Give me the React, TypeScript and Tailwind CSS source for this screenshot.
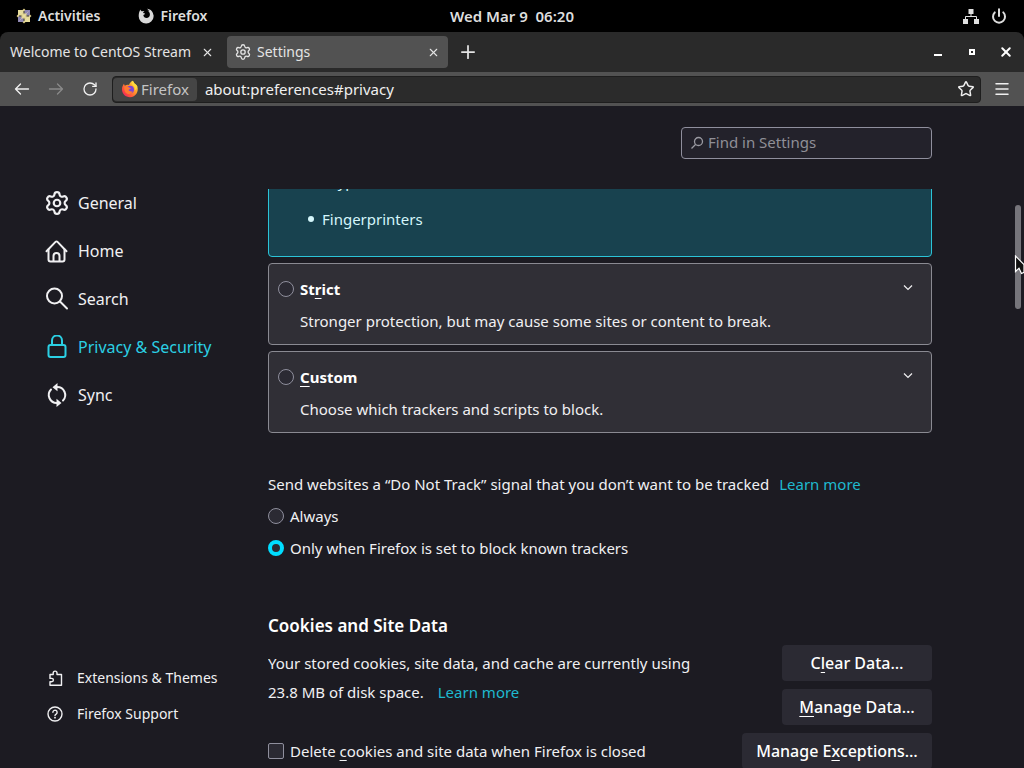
import type { ReactNode } from 'react';
import { Menu, Plus, Power, RotateCw, Settings, Star, X } from 'lucide-react';

function CentosLogo() {
  return (
    <svg width="16" height="16" viewBox="0 0 16 16" aria-hidden="true">
      <path d="M8 .5L10.500 3h-5zM8 15.500L5.500 13h5zM.5 8L3 5.500v5zM15.500 8L13 10.500v-5z" fill="#d3c27a" />
      <path d="M2 2h5.500v5.500H2zM8.500 8.500H14V14H8.500z" fill="#e6dc9c" />
      <path d="M8.500 2H14v5.500H8.500zM2 8.500h5.500V14H2z" fill="#8d86b4" />
      <path d="M5.500 5.500h5v5h-5z" fill="#ddd08a" />
      <path d="M8 1.500v13M1.500 8h13M3.500 3.500l9 9M12.500 3.500l-9 9" stroke="#efe6b4" strokeWidth=".4" />
    </svg>
  );
}

function FirefoxMono() {
  return (
    <svg width="16" height="16" viewBox="0 0 16 16" fill="#d8d8d8" aria-hidden="true">
      <path d="M2.400 1.600c.3 1 .9 1.500 1.600 1.800.8-.4 1.700-.5 2.500-.3-.9.5-1.300 1.100-1.400 1.800l1.900.6c0 .8-1 1.200-1.700 1.600.2 1.800 1.500 2.900 3.200 2.900 2 0 3.400-1.500 3.400-3.500 0-1.800-.9-3.100-2.400-4.100 3.600.3 6.100 2.900 6.100 6.300a7.300 7.300 0 0 1-7.500 6.800A7.300 7.300 0 0 1 .7 8.200C.7 5.600 1.300 3.400 2.400 1.600z" />
      <path d="M9 .8c3.900.2 6.400 3.200 6.400 7.200l-2.900-2.500C12 3.500 10.800 1.900 9 .8z" />
    </svg>
  );
}

function FirefoxLogo() {
  return (
    <svg width="18" height="18" viewBox="0 0 18 18" aria-hidden="true">
      <defs>
        <linearGradient id="fox" x1="1" y1="0.1" x2="0.1" y2="1">
          <stop offset="0" stopColor="#fff04a" />
          <stop offset="0.4" stopColor="#ff9a2b" />
          <stop offset="0.75" stopColor="#ff4a3f" />
          <stop offset="1" stopColor="#e31b6d" />
        </linearGradient>
      </defs>
      <path d="M11.500.8c1 .9 1.600 1.800 1.900 2.700 1.200.6 2.300 1.600 2.900 2.900C18 11 14.800 17.200 9 17.200 4.500 17.200 1 13.800 1 9.500c0-2.200.7-4 2-5.700.1.9.4 1.400.9 1.900C5 4.900 6.600 4.700 8 5c.8-1.900 1.900-3.300 3.500-4.200z" fill="url(#fox)" />
      <circle cx="9.200" cy="9.500" r="3.800" fill="#7a45d6" />
      <path d="M3.500 6.500c2-.8 3.900-.2 5 1.200l1.400.4c-.5 1.200-1.700 1.100-2.300 2 .8 1.500 2.500 1.800 4 1.100-.7 2.400-3 3.300-5.200 2.500-2.200-.9-3.600-3.800-2.900-7.200z" fill="#ff7a32" />
      <path d="M11.500.8c-1.300 1.800-.8 3.300.4 4.400 1.600 1.400 2.300 3 1.900 5 1.700-1.100 2.300-2.600 2.500-3.800-.6-1.300-1.700-2.300-2.900-2.900-.3-.9-.9-1.800-1.900-2.700z" fill="#ffd83d" />
    </svg>
  );
}

function NetworkIcon() {
  return (
    <svg width="16" height="16" viewBox="0 0 16 16" fill="#e0e0e0" aria-hidden="true">
      <path d="M5.500 1h5v5h-5zM0 11h5v5H0zM11 11h5v5h-5z" />
      <path d="M8 6v2.500M2.500 11V8.500h11V11" fill="none" stroke="#e0e0e0" />
    </svg>
  );
}

function Arrow({ className = '' }: { className?: string }) {
  return (
    <svg width="16" height="16" viewBox="0 0 16 16" fill="none" stroke="currentColor" strokeWidth="1.3" strokeLinecap="round" strokeLinejoin="round" className={className} aria-hidden="true">
      <path d="M1.500 8h13M6.500 3l-5 5 5 5" />
    </svg>
  );
}

const HomeIcon = () => (
  <svg width="24" height="24" viewBox="0 0 24 24" fill="none" stroke="currentColor" strokeWidth="2" strokeLinecap="round" strokeLinejoin="round" aria-hidden="true">
    <path d="M1.500 12.200l9-9.300a1.400 1.400 0 0 1 2 0l9 9.300" />
    <path d="M3.500 10.500v10a2 2 0 0 0 2 2h12a2 2 0 0 0 2-2v-10" />
    <path d="M8.500 22v-5a3 3 0 0 1 6 0v5" />
  </svg>
);

const SearchIcon = () => (
  <svg width="24" height="24" viewBox="0 0 24 24" fill="none" stroke="currentColor" strokeWidth="2" strokeLinecap="round" aria-hidden="true">
    <circle cx="9.500" cy="9" r="7.500" />
    <path d="M15 14.500l7 7" />
  </svg>
);

const LockIcon = () => (
  <svg width="24" height="24" viewBox="0 0 24 24" fill="none" stroke="currentColor" strokeWidth="2" aria-hidden="true">
    <rect x="3.500" y="10" width="17" height="12" rx="2" />
    <path d="M7 10V5.500a5 5 0 0 1 10 0V10" />
  </svg>
);

const SyncIcon = () => (
  <svg width="24" height="24" viewBox="0 0 24 24" fill="none" stroke="currentColor" strokeWidth="2" strokeLinecap="round" aria-hidden="true">
    <path d="M12 4a8 8 0 0 1 6 13.500M12 20A8 8 0 0 1 6 6.500" />
    <path d="M12.500 0v8.200L7.500 4.200zM11.500 15.800V24l5-4z" fill="currentColor" stroke="none" />
  </svg>
);

const PuzzleIcon = () => (
  <svg width="16" height="16" viewBox="0 0 16 16" fill="none" stroke="currentColor" strokeWidth="1.400" strokeLinejoin="round" aria-hidden="true">
    <path d="M3 4.500h3.200V3a1.900 1.900 0 0 1 3.800 0v1.500h4.500v10.700H3v-3.400h1.700a1.700 1.700 0 0 0 0-3.400H3z" />
  </svg>
);

const HelpIcon = () => (
  <svg width="16" height="16" viewBox="0 0 16 16" fill="none" stroke="currentColor" strokeWidth="1.400" strokeLinecap="round" aria-hidden="true">
    <circle cx="8" cy="8" r="7" />
    <path d="M5.900 6.300a2.100 2.100 0 1 1 3.200 1.800c-.7.4-1.100.7-1.100 1.400" />
    <circle cx="8" cy="11.700" r=".9" fill="currentColor" stroke="none" />
  </svg>
);

const categories = [
  { label: 'General', icon: <Settings size={24} viewBox="1 1 22 22" /> },
  { label: 'Home', icon: <HomeIcon /> },
  { label: 'Search', icon: <SearchIcon /> },
  { label: 'Privacy & Security', icon: <LockIcon />, active: true },
  { label: 'Sync', icon: <SyncIcon /> },
];

const radio =
  'size-4 shrink-0 appearance-none rounded-full border border-[#8f8f9d] bg-[#2b2a33] checked:border-4 checked:border-[#00ddff]';

function Key({ children }: { children: ReactNode }) {
  return <span className="underline decoration-1 underline-offset-3">{children}</span>;
}

function TopBar() {
  return (
    <header className="grid h-8 shrink-0 grid-cols-3 items-center bg-black px-4 text-sm font-semibold text-[#dedede]">
      <div className="flex items-center gap-[38px]">
        <button className="flex items-center gap-1.5"><CentosLogo />Activities</button>
        <button className="flex items-center gap-1.5"><FirefoxMono />Firefox</button>
      </div>
      <button className="justify-self-center text-[15px] leading-5 whitespace-pre">Wed Mar 9  06:20</button>
      <div className="flex items-center gap-3 justify-self-end pr-px">
        <NetworkIcon />
        <Power size={16} strokeWidth={3} />
      </div>
    </header>
  );
}

function TabBar() {
  return (
    <div className="bg-black">
      <div className="flex h-10 items-center rounded-t-lg bg-[#2a2a2a] text-sm text-[#e4e4e4]">
        <div className="flex w-[227px] items-center gap-2.5 pl-2.5">
          <button className="whitespace-nowrap">Welcome to CentOS Stream</button>
          <button aria-label="Close tab"><X size={13} strokeWidth={2} /></button>
        </div>
        <div className="flex h-8 w-[221px] items-center rounded-sm bg-[#525252] px-2">
          <Settings size={16} viewBox="1 1 22 22" strokeWidth={1.8} />
          <button className="flex-1 pl-1.5 text-left">Settings</button>
          <button aria-label="Close tab"><X size={13} strokeWidth={2} /></button>
        </div>
        <button className="ml-3" aria-label="New tab"><Plus size={16} strokeWidth={2} viewBox="4 4 16 16" className="p-px" /></button>
        <div className="ml-auto flex items-center gap-[22px] pr-3 text-white">
          <button aria-label="Minimize" className="flex size-3 items-end justify-center pb-0.5"><span className="h-0.5 w-2 bg-white" /></button>
          <button aria-label="Restore" className="flex size-3 items-center justify-center"><span className="size-1.5 border-2 border-white" /></button>
          <button aria-label="Close window"><X size={12} strokeWidth={3} viewBox="4 4 16 16" className="p-px" /></button>
        </div>
      </div>
    </div>
  );
}

function NavBar() {
  return (
    <div className="flex h-[34px] shrink-0 items-center bg-[#525252] px-3.5 text-[#f0f0f0]">
      <div className="flex items-center gap-[18px]">
        <button aria-label="Back"><Arrow /></button>
        <button aria-label="Forward" className="text-[#8a8a8a]"><Arrow className="rotate-180" /></button>
        <button aria-label="Reload"><RotateCw size={16} strokeWidth={2} /></button>
      </div>
      <div className="ml-3.5 flex h-[27px] flex-1 items-center rounded-sm border border-[#1e1e1e] bg-[#2b2b2b]">
        <button className="flex h-[23px] items-center gap-0.5 rounded-sm bg-[#454545] px-2 text-[15px] text-[#c4c4c4]">
          <FirefoxLogo />Firefox
        </button>
        <input aria-label="Address" className="min-w-0 flex-1 bg-transparent pl-2 text-[15px] outline-none" defaultValue="about:preferences#privacy" />
        <button aria-label="Bookmark this page" className="pr-1.5"><Star size={16} strokeWidth={2} viewBox="1 1 22 22" /></button>
      </div>
      <button className="-mr-px ml-3" aria-label="Open menu"><Menu size={18} strokeWidth={2} /></button>
    </div>
  );
}

function Sidebar() {
  return (
    <aside className="flex w-[268px] shrink-0 flex-col pt-[73px] pr-7 pb-9 pl-9">
      <nav className="flex flex-col text-base">
        {categories.map(({ label, icon, active }) => (
          <a
            key={label}
            href="#"
            className={`flex h-12 items-center gap-[9px] rounded-sm pl-[9px] ${active ? 'text-[#2bd0e4]' : 'text-[#f0f0f2]'}`}
          >
            {icon}
            {label}
          </a>
        ))}
      </nav>
      <div className="mt-auto flex flex-col text-sm text-[#f0f0f2]">
        <a href="#" className="flex h-9 items-center gap-3.5 pl-[11px]"><PuzzleIcon />Extensions &amp; Themes</a>
        <a href="#" className="flex h-9 items-center gap-3.5 pl-[11px]"><HelpIcon />Firefox Support</a>
      </div>
    </aside>
  );
}

function ProtectionCard({ id, title, text }: { id: string; title: ReactNode; text: string }) {
  return (
    <div className="flex items-start rounded-sm border border-[#8a8a92] bg-[#302f36] pt-[13px] pr-4 pb-[11px] pl-[9px]">
      <input type="radio" name="protection" id={id} className={`mt-1 ${radio}`} />
      <div className="flex-1 pl-1.5">
        <label htmlFor={id} className="block leading-6 font-bold text-white">{title}</label>
        <p className="mt-2 leading-6">{text}</p>
      </div>
      <button aria-label="Expand section" className="mt-1">
        <svg width="14" height="14" viewBox="0 0 14 14" fill="none" stroke="currentColor" strokeWidth="1.200" aria-hidden="true">
          <path d="M3 4.500l4 4 4-4" />
        </svg>
      </button>
    </div>
  );
}

function DataButton({ children, wide }: { children: ReactNode; wide?: boolean }) {
  return (
    <button className={`h-9 rounded-sm bg-[#2b2a33] text-base font-medium text-white ${wide ? 'w-[190px]' : 'w-[150px]'}`}>
      {children}
    </button>
  );
}

export default function App() {
  return (
    <div className="flex h-screen flex-col overflow-hidden bg-[#1c1b22] font-['Noto_Sans',sans-serif]">
      <TopBar />
      <TabBar />
      <NavBar />
      <div className="relative flex min-h-0 flex-1">
        <Sidebar />
        <main className="flex min-w-0 max-w-[664px] flex-1 flex-col pt-[21px] text-[15px] text-[#f0f0f2]">
          <label className="flex h-8 w-[251px] shrink-0 items-center gap-1 self-end rounded-sm border border-[#8f8f9d] bg-[#23222b] px-2 text-[#9a9aa2]">
            <svg width="14" height="14" viewBox="0 0 14 14" fill="none" stroke="currentColor" strokeWidth="1.300" aria-hidden="true">
              <circle cx="8.500" cy="5.500" r="4" />
              <path d="M5.500 8.500L1.500 12.500" />
            </svg>
            <input type="search" aria-label="Find in Settings" placeholder="Find in Settings" className="min-w-0 flex-1 bg-transparent pb-px outline-none placeholder:text-[#8f8f97]" />
          </label>

          <div className="mt-[30px] min-h-0 flex-1 overflow-hidden">
            <div className="-mt-[25px] flex flex-col gap-1.5">
              <div className="rounded-sm border border-[#2bc4d8] bg-[#18424f] pt-1 pb-[25px] pl-[39px]">
                <ul className="flex flex-col gap-3.5 leading-6 text-[#d5f6fb]">
                  {['Cryptominers', 'Fingerprinters'].map((item) => (
                    <li key={item} className="flex items-center gap-2 before:size-1.5 before:rounded-full before:bg-[#d5f6fb]">
                      {item}
                    </li>
                  ))}
                </ul>
              </div>
              <ProtectionCard id="strict" title={<>St<Key>r</Key>ict</>} text="Stronger protection, but may cause some sites or content to break." />
              <ProtectionCard id="custom" title={<><Key>C</Key>ustom</>} text="Choose which trackers and scripts to block." />
            </div>

            <section className="mt-[39px]">
              <p className="leading-6">
                Send websites a “Do Not Track” signal that you don’t want to be tracked
                <a href="#" className="ml-2.5 text-[#1fb9cf]">Learn more</a>
              </p>
              <label className="mt-2 flex items-center gap-1.5 leading-6">
                <input type="radio" name="dnt" className={radio} />
                Always
              </label>
              <label className="mt-2 flex items-center gap-1.5 leading-6">
                <input type="radio" name="dnt" defaultChecked className={radio} />
                Only when Firefox is set to block known trackers
              </label>
            </section>

            <section className="mt-[52px]">
              <h2 className="text-[17px] leading-7 font-semibold text-white">Cookies and Site Data</h2>
              <div className="mt-[5px] flex items-start justify-between">
                <div>
                  <p className="mt-1 max-w-[450px] leading-[29px]">
                    Your stored cookies, site data, and cache are currently using 23.8 MB of disk space.
                    <a href="#" className="ml-3.5 text-[#1fb9cf]">Learn more</a>
                  </p>
                  <label className="mt-8 flex items-center gap-1.5 leading-6">
                    <input type="checkbox" className="size-4 appearance-none rounded-xs border border-[#8f8f9d] bg-[#2b2a33]" />
                    <span>Delete <Key>c</Key>ookies and site data when Firefox is closed</span>
                  </label>
                </div>
                <div className="flex flex-col items-end gap-2">
                  <DataButton>C<Key>l</Key>ear Data…</DataButton>
                  <DataButton><Key>M</Key>anage Data…</DataButton>
                  <DataButton wide>Manage E<Key>x</Key>ceptions…</DataButton>
                </div>
              </div>
            </section>
          </div>
        </main>

        {/* scrollbar thumb with the pointer resting on it */}
        <div className="absolute top-[99px] right-[3px] h-[104px] w-1.5 rounded-full bg-[#76757b]" />
        <svg className="absolute top-[149px] right-0" width="10" height="20" viewBox="0 0 10 20" aria-hidden="true">
          <path d="M1.500 1v15.500l3.500-3.300 2.500 5.300 2.500-1.200V9.500z" fill="#111" stroke="#fff" strokeWidth="1.200" />
        </svg>
      </div>
    </div>
  );
}
